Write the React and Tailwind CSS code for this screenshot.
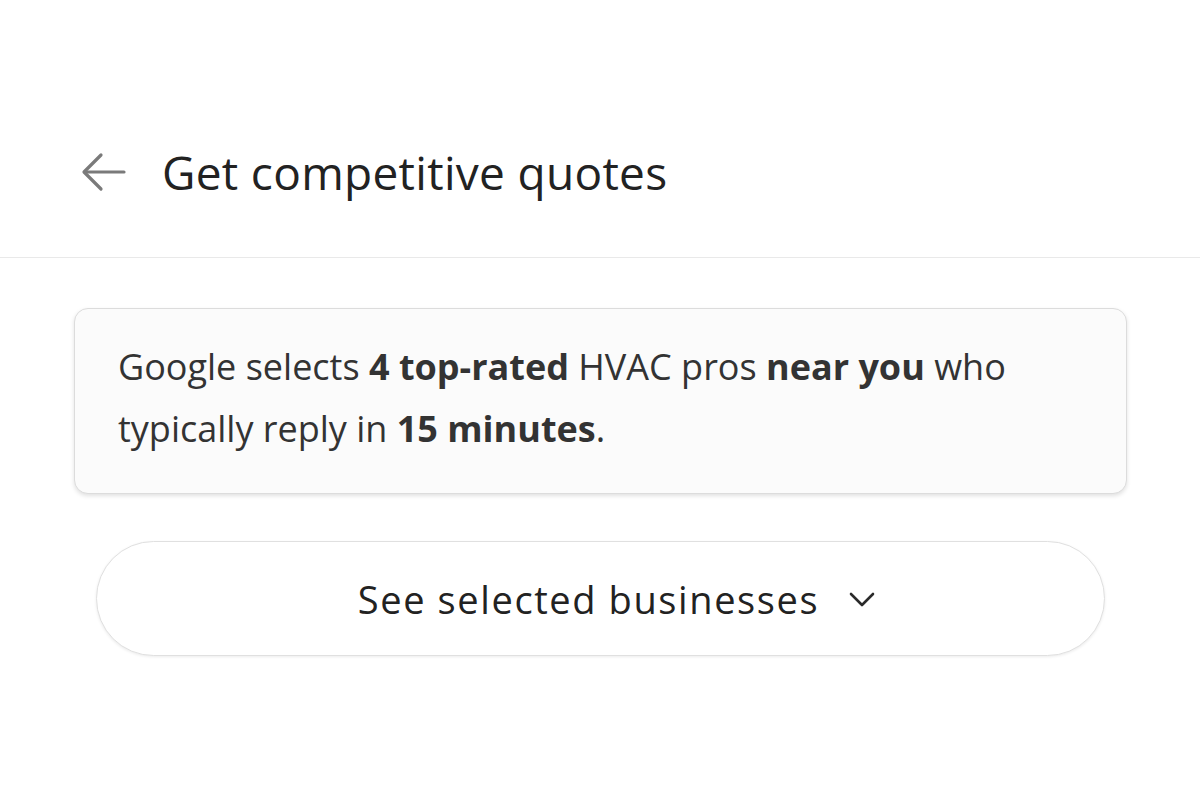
import React from "react";

const BackArrow = () => (
  <svg width="46" height="40" viewBox="0 0 46 40" fill="none" stroke="#7a7a7a" strokeWidth="3.2" strokeLinecap="round" strokeLinejoin="round">
    <path d="M43 20H4" />
    <path d="M20 3L3 20l17 17" />
  </svg>
);

const Chevron = () => (
  <svg width="26" height="16" viewBox="0 0 26 16" fill="none" stroke="#2a2a2a" strokeWidth="2.6" strokeLinecap="round" strokeLinejoin="round">
    <path d="M2 3l11 11 11-11" />
  </svg>
);

export default function App() {
  return (
    <div className="w-[1200px] h-[799px] bg-white overflow-hidden" style={{ fontFamily: "'Open Sans', 'Noto Sans', sans-serif" }}>
      <header className="h-[258px] border-b border-[#e9e9e9] pt-[149px]">
        <div className="flex items-center pl-[81px]">
          <BackArrow />
          <h1 className="ml-[35px] text-[46px] leading-none text-[#222] tracking-[0.3px]">Get competitive quotes</h1>
        </div>
      </header>

      <main className="px-[74px] pt-[50px]">
        <div className="w-[1053px] h-[186px] rounded-[14px] border border-[#dcdcdc] bg-[#fbfbfb] shadow-[0_2px_4px_rgba(0,0,0,0.12)] px-[43px] pt-[27px]">
          <p className="text-[36px] leading-[62px] text-[#333] whitespace-nowrap">
            Google selects <b className="font-bold">4 top-rated</b> HVAC pros <b className="font-bold">near you</b> who
            <br />
            typically reply in <b className="font-bold">15 minutes</b>.
          </p>
        </div>

        <div className="px-[22px] pt-[47px]">
          <button className="w-[1009px] h-[115px] rounded-full border border-[#e0e0e0] bg-white shadow-[0_1px_3px_rgba(0,0,0,0.08)] flex items-center justify-center gap-[30px] pl-[32px]">
            <span className="text-[38px] leading-none text-[#222] tracking-[1.6px]">See selected businesses</span>
            <Chevron />
          </button>
        </div>
      </main>
    </div>
  );
}
